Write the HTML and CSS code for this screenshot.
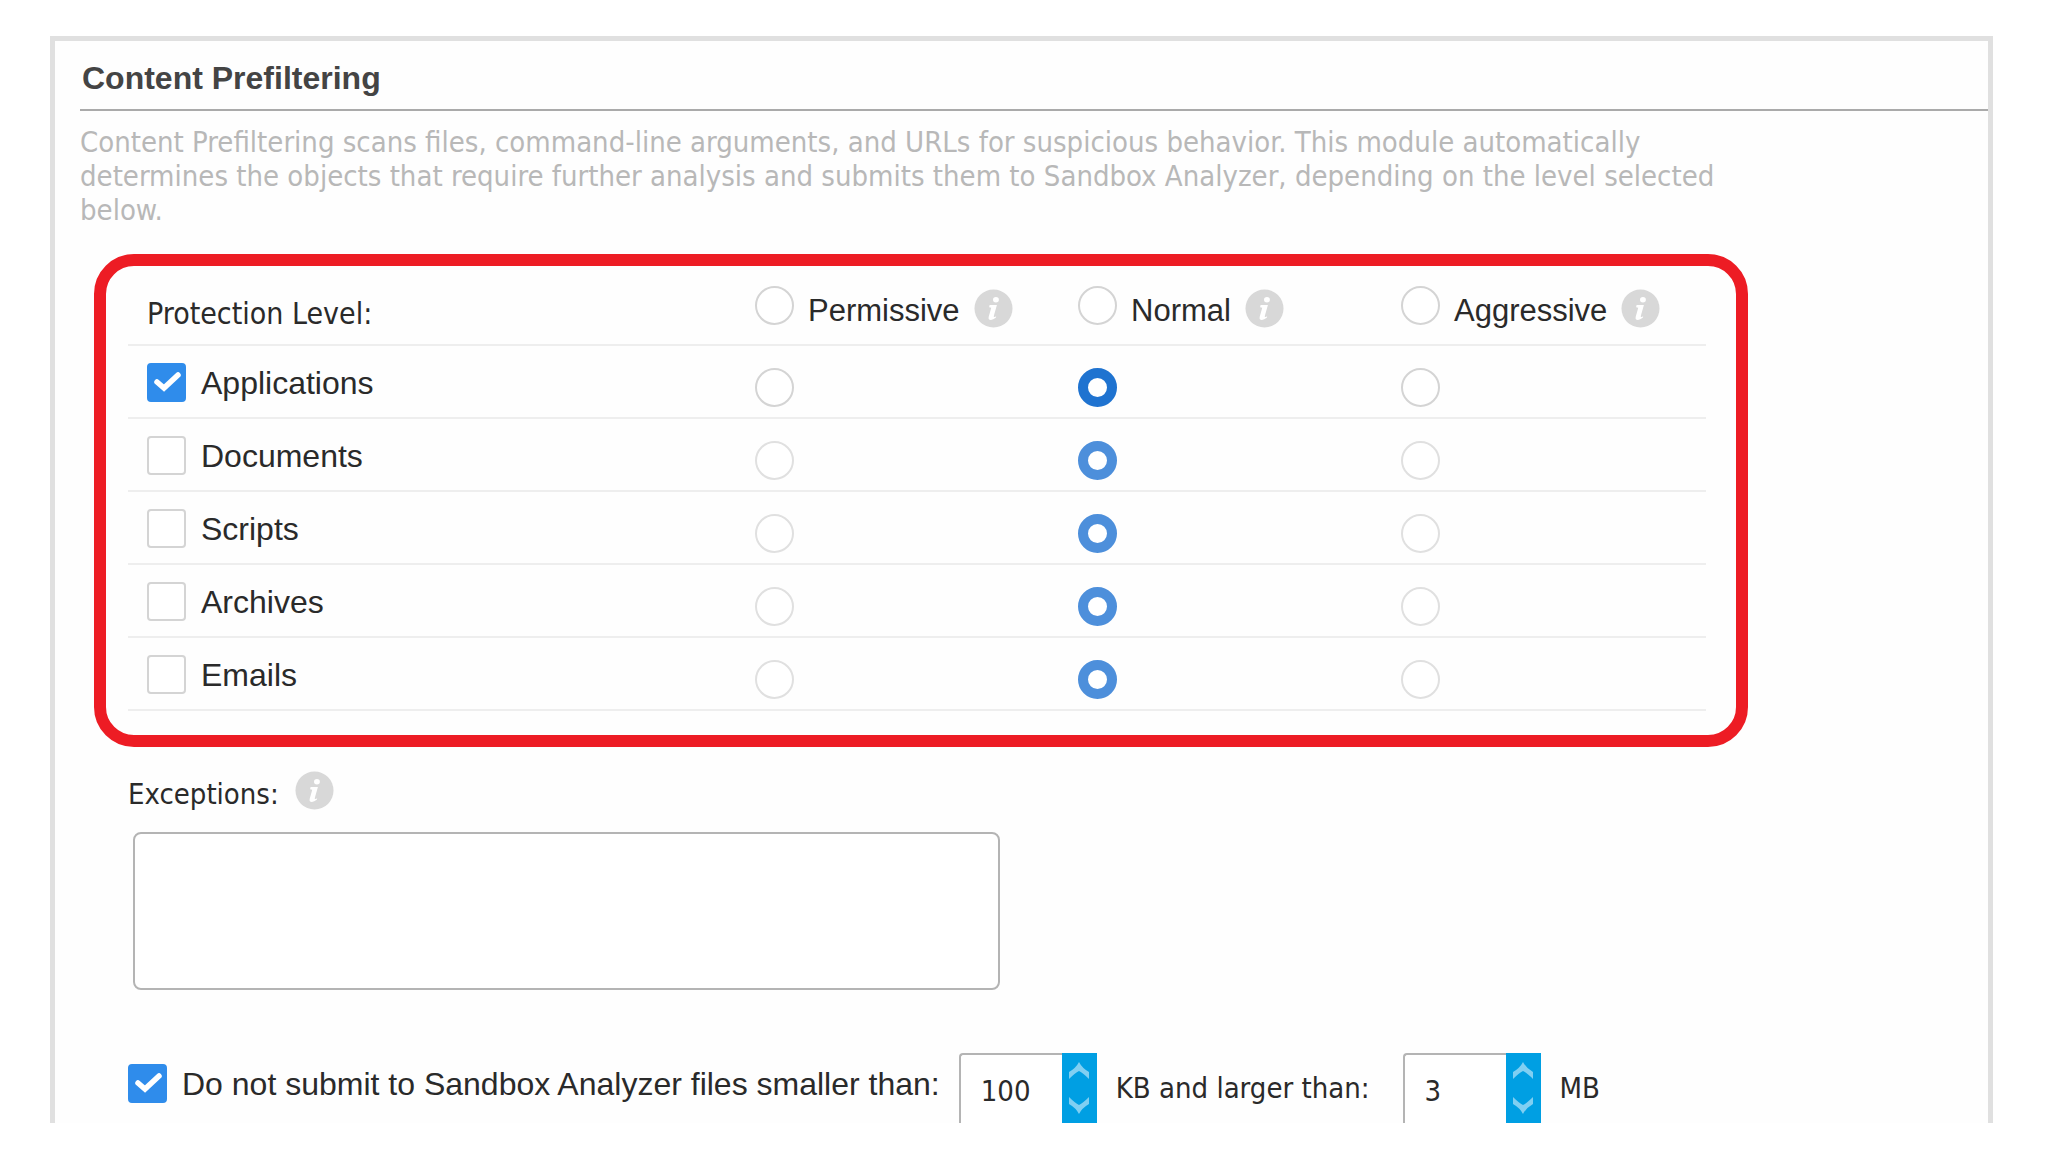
FILE: index.html
```html
<!DOCTYPE html>
<html lang="en">
<head>
<meta charset="utf-8">
<title>Content Prefiltering</title>
<link rel="stylesheet" href="styles.css">
</head>
<body>
<svg class="sprite" aria-hidden="true">
  <symbol id="info" viewBox="0 0 40 40">
    <circle cx="20" cy="20" r="19.5" fill="#d8d8d8"/>
    <ellipse cx="22.5" cy="11" rx="3" ry="2.8" fill="#fff"/>
    <path d="M16 16.5h7.5l-3.2 11.2q-.3 1.300.9 1l1.600-.8-.5 1.700q-2.600 2.200-5 2.200-3 0-2.200-3.300l2.600-9.200-2.200-.5z" fill="#fff"/>
  </symbol>
  <symbol id="up" viewBox="0 0 20 17">
    <path d="M10 0q3 6 10 10v7q-6-6-10-8-4 2-10 8v-7q7-4 10-10z" fill="#80cff2"/>
  </symbol>
  <symbol id="down" viewBox="0 0 20 17">
    <path d="M10 17q3-6 10-10v-7q-6 6-10 8-4-2-10-8v7q7 4 10 10z" fill="#80cff2"/>
  </symbol>
</svg>
<main class="panel">
  <h1 class="title">Content Prefiltering</h1>
  <p class="intro">Content Prefiltering scans files, command-line arguments, and URLs for suspicious behavior. This module automatically determines the objects that require further analysis and submits them to Sandbox Analyzer, depending on the level selected below.</p>

  <section class="levels">
    <table class="grid">
      <thead>
        <tr>
          <th class="name caption" scope="col">Protection Level:</th>
          <th scope="col"><div class="option"><input class="radio" type="radio" name="all" id="permissive"><label for="permissive">Permissive</label><svg class="info"><use href="#info"/></svg></div></th>
          <th scope="col"><div class="option"><input class="radio" type="radio" name="all" id="normal"><label for="normal">Normal</label><svg class="info"><use href="#info"/></svg></div></th>
          <th scope="col"><div class="option"><input class="radio" type="radio" name="all" id="aggressive"><label for="aggressive">Aggressive</label><svg class="info"><use href="#info"/></svg></div></th>
        </tr>
      </thead>
      <tbody>
        <tr>
          <td class="name"><label class="choice"><input class="check" type="checkbox" checked>Applications</label></td>
          <td><input class="radio" type="radio" name="applications" aria-label="Applications: Permissive"></td>
          <td><input class="radio" type="radio" name="applications" aria-label="Applications: Normal" checked></td>
          <td><input class="radio" type="radio" name="applications" aria-label="Applications: Aggressive"></td>
        </tr>
        <tr>
          <td class="name"><label class="choice"><input class="check" type="checkbox">Documents</label></td>
          <td><input class="radio" type="radio" name="documents" aria-label="Documents: Permissive" disabled></td>
          <td><input class="radio" type="radio" name="documents" aria-label="Documents: Normal" checked disabled></td>
          <td><input class="radio" type="radio" name="documents" aria-label="Documents: Aggressive" disabled></td>
        </tr>
        <tr>
          <td class="name"><label class="choice"><input class="check" type="checkbox">Scripts</label></td>
          <td><input class="radio" type="radio" name="scripts" aria-label="Scripts: Permissive" disabled></td>
          <td><input class="radio" type="radio" name="scripts" aria-label="Scripts: Normal" checked disabled></td>
          <td><input class="radio" type="radio" name="scripts" aria-label="Scripts: Aggressive" disabled></td>
        </tr>
        <tr>
          <td class="name"><label class="choice"><input class="check" type="checkbox">Archives</label></td>
          <td><input class="radio" type="radio" name="archives" aria-label="Archives: Permissive" disabled></td>
          <td><input class="radio" type="radio" name="archives" aria-label="Archives: Normal" checked disabled></td>
          <td><input class="radio" type="radio" name="archives" aria-label="Archives: Aggressive" disabled></td>
        </tr>
        <tr>
          <td class="name"><label class="choice"><input class="check" type="checkbox">Emails</label></td>
          <td><input class="radio" type="radio" name="emails" aria-label="Emails: Permissive" disabled></td>
          <td><input class="radio" type="radio" name="emails" aria-label="Emails: Normal" checked disabled></td>
          <td><input class="radio" type="radio" name="emails" aria-label="Emails: Aggressive" disabled></td>
        </tr>
      </tbody>
    </table>
  </section>

  <section class="exceptions">
    <div class="exceptions-head"><label class="caption" for="exceptions">Exceptions:</label><svg class="info"><use href="#info"/></svg></div>
    <textarea class="exceptions-box" id="exceptions"></textarea>
  </section>

  <section class="limits">
    <label class="choice limit-toggle"><input class="check" type="checkbox" checked>Do not submit to Sandbox Analyzer files smaller than:</label>
    <div class="stepper">
      <input class="number" type="text" inputmode="numeric" value="100" aria-label="Minimum size in KB">
      <div class="arrows">
        <button class="arrow" type="button" aria-label="Increase"><svg><use href="#up"/></svg></button>
        <button class="arrow" type="button" aria-label="Decrease"><svg><use href="#down"/></svg></button>
      </div>
    </div>
    <label class="caption unit unit-between" for="max">KB and larger than:</label>
    <div class="stepper">
      <input class="number" id="max" type="text" inputmode="numeric" value="3">
      <div class="arrows">
        <button class="arrow" type="button" aria-label="Increase"><svg><use href="#up"/></svg></button>
        <button class="arrow" type="button" aria-label="Decrease"><svg><use href="#down"/></svg></button>
      </div>
    </div>
    <span class="caption unit">MB</span>
  </section>
</main>
</body>
</html>
```
FILE: styles.css
```css
* { box-sizing: border-box; }

body {
  margin: 36px 55px 28px 50px;
  background: #fff;
  color: #2a2a2a;
  font: 32px/36px "Liberation Sans", Arial, sans-serif;
}

.sprite { position: absolute; width: 0; height: 0; }

.panel {
  border: 5px solid #e0e0e0;
  border-bottom: 0;
  padding: 18px 0 0 25px;
  background: #fefefe;
}

.title {
  margin: 0;
  padding: 2px 0 14px 2px;
  border-bottom: 2px solid #aaa;
  color: #444;
  font-size: 32px;
  line-height: 34px;
}

.caption, .intro, .number {
  font-family: "DejaVu Sans Condensed", "DejaVu Sans", Tahoma, sans-serif;
  font-stretch: condensed;
  font-size: 29px;
}

.intro {
  max-width: 1700px;
  margin: 14px 0 27px;
  color: #b8b8b8;
  line-height: 34px;
}

.levels {
  max-width: 1654px;
  margin-left: 14px;
  padding: 6px 30px 24px 22px;
  border: 12px solid #ed1c24;
  border-radius: 40px;
}

.grid {
  width: 100%;
  border-collapse: collapse;
  table-layout: fixed;
}

.grid th, .grid td {
  height: 73px;
  padding: 12px 0 0;
  border-bottom: 2px solid #eee;
  text-align: left;
  font-weight: normal;
}

.grid .name { width: 627px; padding: 2px 0 0 19px; }

.grid th { padding-top: 14px; vertical-align: top; }

.grid th.name { padding-top: 24px; font-size: 30px; }

.grid th:last-child, .grid td:last-child { width: 305px; }

.option { display: flex; align-items: flex-start; gap: 14px; font-size: 31px; }

.option label { padding-top: 7px; }

.option .info { margin-top: 3px; }

.info { flex: none; width: 39px; height: 39px; }

.choice { display: flex; align-items: center; gap: 15px; }

.check, .radio {
  flex: none;
  display: block;
  appearance: none;
  width: 39px;
  height: 39px;
  margin: 0;
  border: 2px solid #d4d4d4;
  background: #fff;
}

.check { border-radius: 4px; }

.check:checked {
  border-color: #2f8ceb;
  background: #2f8ceb url("data:image/svg+xml,%3Csvg xmlns='http://www.w3.org/2000/svg' viewBox='0 0 35 35'%3E%3Cpath d='M8 17l7 6L29 10' fill='none' stroke='white' stroke-width='5.500' stroke-linecap='round'/%3E%3C/svg%3E");
}

.radio { border-radius: 50%; }

.radio:disabled { border-color: #e0e0e0; }

.radio:checked { border: 10px solid #1f73d0; }

.radio:checked:disabled { border-color: #4d8fdb; }

.exceptions { padding: 24px 0 0 48px; }

.exceptions-head { display: flex; align-items: flex-start; gap: 16px; }

.exceptions-head label { padding-top: 5px; }

.exceptions-box {
  display: block;
  width: 100%;
  max-width: 867px;
  height: 158px;
  margin: 20px 0 0 5px;
  border: 2px solid #b4b4b4;
  border-radius: 8px;
  resize: none;
}

.limits {
  display: flex;
  align-items: flex-start;
  gap: 19px;
  padding: 63px 0 0 48px;
}

.limit-toggle { padding-top: 11px; }

.stepper { display: flex; }

.number {
  width: 103px;
  height: 70px;
  padding: 4px 0 0 20px;
  border: 2px solid #b4b4b4;
  border-width: 2px 0 0 2px;
  border-radius: 4px 0 0 0;
  color: #2a2a2a;
}

.arrows { display: flex; flex-direction: column; width: 35px; background: #009fe3; }

.arrow { display: flex; flex: 1; align-items: center; justify-content: center; padding: 0; border: 0; background: none; }

.arrow svg { width: 20px; height: 17px; }

.unit { padding-top: 17px; }

.unit-between { margin-right: 14px; }
```
